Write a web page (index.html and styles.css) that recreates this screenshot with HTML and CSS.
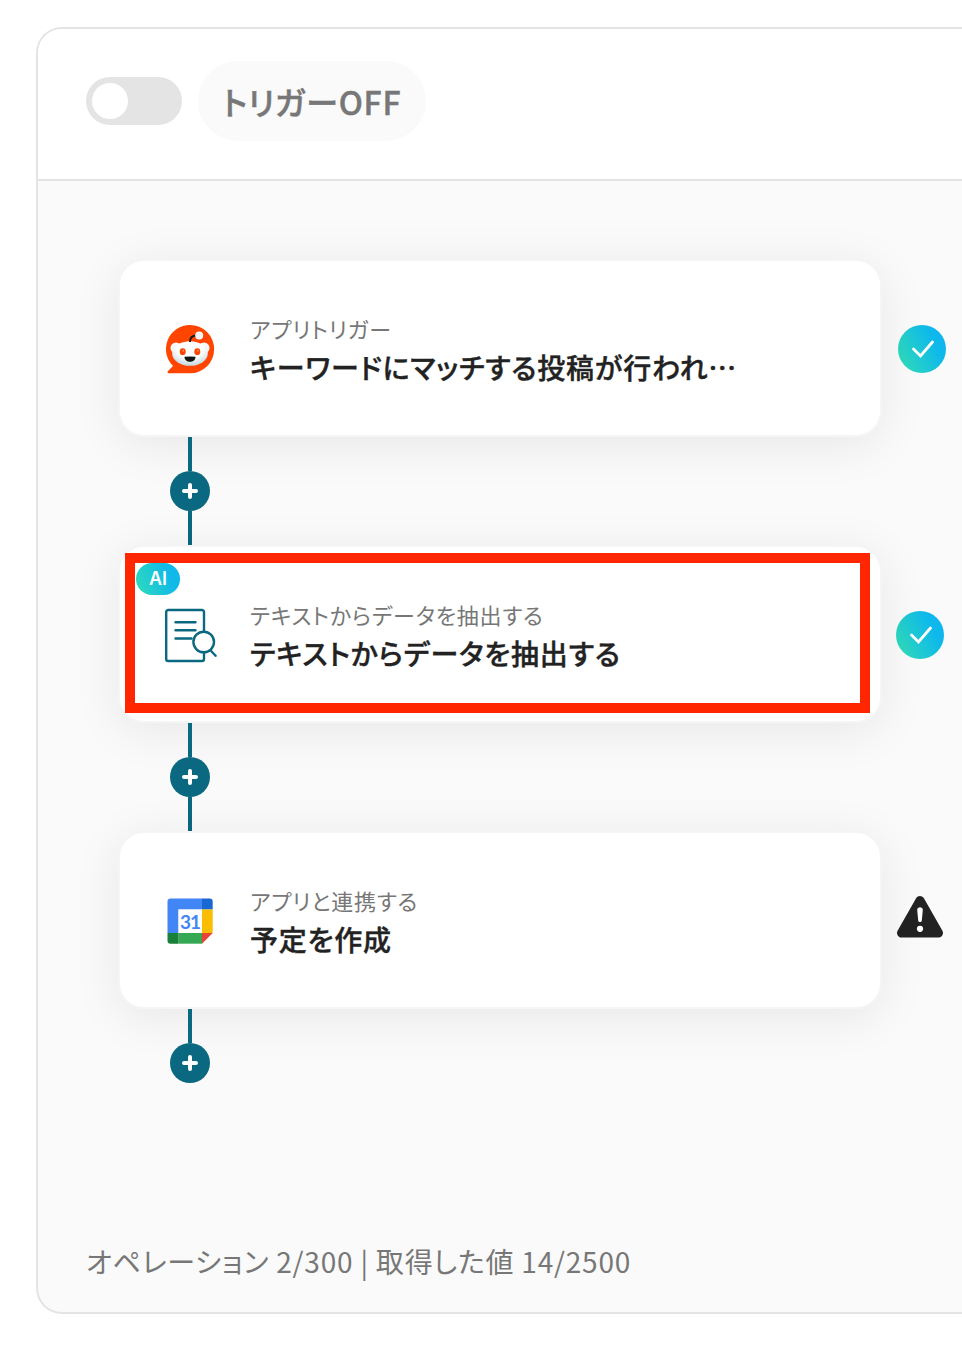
FILE: index.html
```html
<!DOCTYPE html>
<html lang="ja">
<head>
  <meta charset="UTF-8">
  <meta name="viewport" content="width=device-width, initial-scale=1.0">
  <title>フロー</title>
  <link rel="stylesheet" href="styles.css">
</head>
<body>
  <div class="panel">
    <div class="header">
      <div class="toggle"><div class="knob"></div></div>
      <div class="trigger-label">トリガーOFF</div>
    </div>

    <div class="flow">
      <div class="row">
        <div class="card">
          <svg class="icon" width="56" height="56" viewBox="0 0 56 56">
            <defs>
              <radialGradient id="face" cx="50%" cy="30%" r="75%">
                <stop offset="0.5" stop-color="#ffffff"/>
                <stop offset="1" stop-color="#b9cfd8"/>
              </radialGradient>
            </defs>
            <path d="M28 4a24 24 0 1 1 0 48.300H7c-1.400 0-2-1.300-1-2.300l5-5A24 24 0 0 1 28 4z" fill="#ff4500"/>
            <circle cx="14" cy="27" r="5.500" fill="#f3f8fa"/>
            <circle cx="42" cy="27" r="5.500" fill="#f3f8fa"/>
            <ellipse cx="28" cy="32.500" rx="17.800" ry="12.300" fill="url(#face)"/>
            <path d="M28 21c0-4 2.500-6.500 6.500-6.500" fill="none" stroke="#1a1a1a" stroke-width="1.800"/>
            <circle cx="37.200" cy="14.500" r="4" fill="#f0f6f8"/>
            <ellipse cx="20.700" cy="30.700" rx="3" ry="3.400" fill="#ff4500"/>
            <ellipse cx="35.300" cy="30.700" rx="3" ry="3.400" fill="#ff4500"/>
            <circle cx="21.300" cy="29.700" r="0.800" fill="#ffb080"/>
            <circle cx="35.900" cy="29.700" r="0.800" fill="#ffb080"/>
            <path d="M22.500 35.800q5.500-.800 11 0c0 3.200-2.400 5-5.500 5s-5.500-1.800-5.500-5z" fill="#141414"/>
          </svg>
          <div class="text">
            <div class="sub">アプリトリガー</div>
            <div class="title">キーワードにマッチする投稿が行われ…</div>
          </div>
        </div>
        <svg class="status first" width="48" height="48" viewBox="0 0 48 48">
          <defs>
            <linearGradient id="done" x1="0" y1="0.750" x2="1" y2="0.250">
              <stop offset="0" stop-color="#2fdcb9"/>
              <stop offset="0.750" stop-color="#0fb9ea"/>
              <stop offset="1" stop-color="#0fb5f0"/>
            </linearGradient>
          </defs>
          <circle cx="24" cy="24" r="24" fill="url(#done)"/>
          <path d="M15.500 24l7 7L34.500 17" fill="none" stroke="#fff" stroke-width="2.800" stroke-linecap="round"/>
        </svg>
      </div>

      <div class="connector">
        <div class="line"></div>
        <svg class="plus" width="40" height="40" viewBox="0 0 40 40"><circle cx="20" cy="20" r="20"/><path d="M20 14v12M14 20h12"/></svg>
        <div class="line"></div>
      </div>

      <div class="row">
        <div class="card">
          <svg class="icon" width="56" height="56" viewBox="0 0 56 56" fill="none" stroke="#0a6880" stroke-width="2.400" stroke-linecap="round">
            <path d="M42 24V5a2 2 0 0 0-2-2H6.200a2 2 0 0 0-2 2v47a2 2 0 0 0 2 2H40a2 2 0 0 0 2-2v-5"/>
            <path d="M13.500 15.200h20M13.500 23.200h20M13.500 31.500h16"/>
            <circle cx="41.700" cy="35" r="10.300"/>
            <path d="M48.600 43.500l5 5.300"/>
          </svg>
          <div class="text">
            <div class="sub">テキストからデータを抽出する</div>
            <div class="title">テキストからデータを抽出する</div>
          </div>
          <div class="ai-badge">AI</div>
          <div class="highlight"></div>
        </div>
        <svg class="status" width="48" height="48" viewBox="0 0 48 48">
          <circle cx="24" cy="24" r="24" fill="url(#done)"/>
          <path d="M15.500 24l7 7L34.500 17" fill="none" stroke="#fff" stroke-width="2.800" stroke-linecap="round"/>
        </svg>
      </div>

      <div class="connector">
        <div class="line"></div>
        <svg class="plus" width="40" height="40" viewBox="0 0 40 40"><circle cx="20" cy="20" r="20"/><path d="M20 14v12M14 20h12"/></svg>
        <div class="line"></div>
      </div>

      <div class="row">
        <div class="card">
          <svg class="icon" width="56" height="56" viewBox="0 0 56 56">
            <path d="M8.500 5.500H40v11H16.500V40h-11V8.500a3 3 0 0 1 3-3z" fill="#4285f4"/>
            <path d="M40 5.500h7.700a3 3 0 0 1 3 3v8H40z" fill="#1967d2"/>
            <path d="M40 16.500h10.700V40H40z" fill="#fbbc04"/>
            <path d="M16.500 40H40v10.700H16.500z" fill="#34a853"/>
            <path d="M5.500 40h11v10.700h-8a3 3 0 0 1-3-3z" fill="#188038"/>
            <path d="M40 40h10.700L40 50.700z" fill="#ea4335"/>
            <path d="M16.500 16.500H40V40H16.500z" fill="#fff"/>
            <text class="cal-day" x="28" y="35.500" text-anchor="middle">31</text>
          </svg>
          <div class="text">
            <div class="sub">アプリと連携する</div>
            <div class="title">予定を作成</div>
          </div>
        </div>
        <svg class="status warn" width="48" height="48" viewBox="0 0 48 48">
          <path d="M24 7.500L5.500 40h37z" fill="#222" stroke="#222" stroke-width="9" stroke-linejoin="round"/>
          <path d="M21.200 17c0-3.600 5.600-3.600 5.600 0l-1 10.500c-.2 2-3.400 2-3.600 0z" fill="#fff"/>
          <circle cx="24" cy="35.800" r="3.100" fill="#fff"/>
        </svg>
      </div>

      <div class="connector">
        <div class="line"></div>
        <svg class="plus" width="40" height="40" viewBox="0 0 40 40"><circle cx="20" cy="20" r="20"/><path d="M20 14v12M14 20h12"/></svg>
      </div>
    </div>

    <div class="footer">オペレーション 2/300 | 取得した値 14/2500</div>
  </div>
</body>
</html>
```
FILE: styles.css
```css
* {
  box-sizing: border-box;
}
body {
  margin: 0;
  padding: 27px 0 0 36px;
  background: #fff;
  font-family: "Noto Sans CJK JP", sans-serif;
  font-feature-settings: "palt";
  letter-spacing: 0.05em;
  color: #222;
}
.panel {
  display: flex;
  flex-direction: column;
  height: 1287px;
  border: 2px solid #e4e4e4;
  border-right: none;
  border-radius: 26px 0 0 26px;
  background: #fafafa;
  overflow: hidden;
}
.header {
  display: flex;
  align-items: center;
  gap: 16px;
  height: 152px;
  padding: 0 48px 6px;
  border-bottom: 2px solid #e4e4e4;
  background: #fff;
}
.toggle {
  width: 96px;
  height: 48px;
  padding: 6px;
  border-radius: 24px;
  background: #e4e4e4;
}
.knob {
  width: 36px;
  height: 36px;
  border-radius: 50%;
  background: #fff;
}
.trigger-label {
  width: 228px;
  height: 80px;
  border-radius: 40px;
  background: #fafafa;
  color: #777;
  font-size: 32px;
  font-weight: 500;
  line-height: 80px;
  text-align: center;
  white-space: nowrap;
  -webkit-text-stroke: 0.5px #777;
}
.flow {
  padding: 78px 0 0 80px;
}
.row {
  display: flex;
  align-items: center;
}
.card {
  position: relative;
  display: flex;
  align-items: center;
  gap: 32px;
  width: 764px;
  height: 178px;
  padding: 0 42px;
  border: 2px solid #f5f5f5;
  border-radius: 26px;
  background: #fff;
  box-shadow: 0 8px 48px rgba(0,0,0,0.08);
}
.icon {
  flex: none;
  margin-top: 2px;
}
.sub {
  color: #777;
  font-size: 22px;
  line-height: 36px;
}
.title {
  margin-top: 1px;
  font-size: 28px;
  font-weight: 500;
  line-height: 40px;
  white-space: nowrap;
  -webkit-text-stroke: 0.4px #222;
}
.status {
  flex: none;
  margin: 2px 0 0 14px;
}
.status.first {
  margin-left: 16px;
}
.status.warn {
  margin-top: -7px;
}
.connector {
  position: relative;
  display: flex;
  flex-direction: column;
  align-items: center;
  width: 40px;
  margin-left: 52px;
}
.line {
  width: 4px;
  height: 34px;
  background: #0a6880;
}
.plus {
  fill: #0a6880;
  stroke-linecap: round;
}
.plus path {
  stroke: #fff;
  stroke-width: 4;
}
/* overlays on the AI step */
.ai-badge {
  position: absolute;
  top: 16px;
  left: 16px;
  width: 44px;
  height: 32px;
  border-radius: 16px;
  background: linear-gradient(70deg, #2fdcb9, #0fb9ea 75%);
  color: #fff;
  font-family: Inter, sans-serif;
  font-size: 18px;
  font-weight: 600;
  letter-spacing: 0;
  line-height: 32px;
  text-align: center;
}
.highlight {
  position: absolute;
  top: 6px;
  left: 5px;
  width: 745px;
  height: 160px;
  border: 10px solid #ff2600;
}
.cal-day {
  fill: #4285f4;
  font-family: Lato, sans-serif;
  font-size: 19px;
  font-weight: 700;
  letter-spacing: -0.06em;
}
.footer {
  margin-top: auto;
  padding: 0 48px 29px;
  color: #777;
  font-size: 28px;
  line-height: 44px;
}
```
